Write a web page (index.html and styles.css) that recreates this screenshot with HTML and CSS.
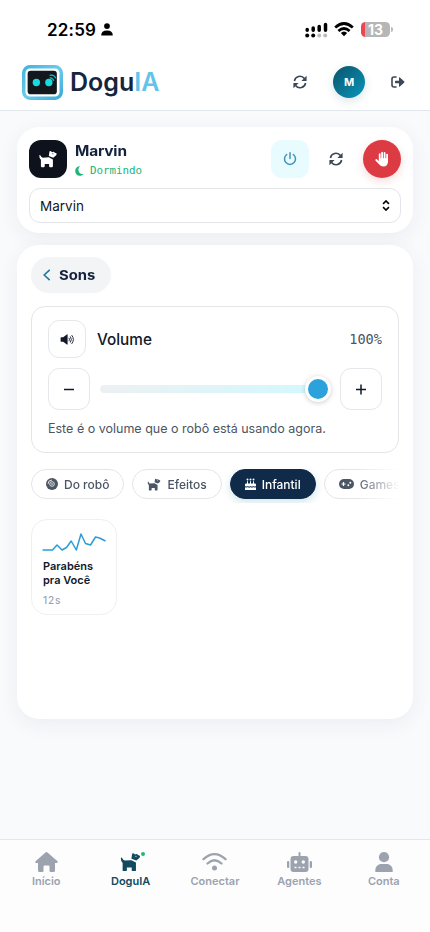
FILE: index.html
```html
<!DOCTYPE html>
<html lang="pt-BR">
<head>
<meta charset="utf-8">
<meta name="viewport" content="width=device-width, initial-scale=1">
<title>DoguIA</title>
<link rel="stylesheet" href="styles.css">
</head>
<body>
<svg class="defs" aria-hidden="true">
  <symbol id="dog" viewBox="0 0 70 66"><path fill-rule="evenodd" d="M3 20Q5 16 8 21Q10 27 16 28L38 27L53 35V60Q53 63 50 63H42Q39 63 39 60V51H23V60Q23 63 20 63H12Q9 63 9 60V36Q3 32 3 20ZM40 8Q41 2 46 5L50 8Q56 4 60 10L66 12Q68 17 64 20Q58 26 54 28L38 22ZM51 14a2 2 0 1 0 4 0a2 2 0 1 0-4 0Z"/></symbol>
  <symbol id="sync" viewBox="0 0 14 14"><path d="M1.400 6A5.600 5.600 0 0 1 11.400 3.600M12.600 8A5.600 5.600 0 0 1 2.600 10.400" fill="none" stroke="currentColor" stroke-width="1.600"/><path d="M13.600.8V6H8.400ZM.4 13.200V8H5.600Z"/></symbol>
  <symbol id="user" viewBox="0 0 18 20"><circle cx="9" cy="5.200" r="5.100"/><path d="M.3 20V18.400C.3 14.500 3 12 6.500 12H11.500C15 12 17.700 14.500 17.700 18.400V20Z"/></symbol>
</svg>

<header class="top">
  <div class="status">
    <span class="clock">22:59</span>
    <svg class="person" viewBox="0 0 12 13"><circle cx="6" cy="3.100" r="2.900"/><path d="M.2 12.600Q.2 7.500 6 7.500T11.800 12.600Z"/></svg>
    <svg class="signal" viewBox="0 0 23 16"><g stroke="#000" stroke-width="3.500" stroke-linecap="round"><path d="M2.200 7.500v.8M8.200 6v2.300M14.200 4.500v3.800M20.500 2.500v5.800"/></g><circle cx="2.200" cy="13.500" r="2"/><circle cx="8.200" cy="13.500" r="2"/><circle cx="14.200" cy="13.500" r="2" fill="#bbb"/><circle cx="20.200" cy="13.500" r="2" fill="#bbb"/></svg>
    <svg class="wifi" viewBox="0 0 20 15"><g fill="none" stroke="#000" stroke-width="2.700"><path d="M1.200 5.500Q10-2.500 18.800 5.500M4.400 9Q10 4 15.600 9"/></g><path d="M6.800 11Q10 8 13.200 11L10 14.300Z"/></svg>
    <span class="battery">13</span><i class="battery-tip"></i>
  </div>
  <div class="brandbar">
    <svg class="logo" viewBox="0 0 40 34"><defs><linearGradient id="lg" x2="1" y2="1"><stop stop-color="#43b4dc"/><stop offset=".5" stop-color="#6ccbed"/><stop offset="1" stop-color="#3caad8"/></linearGradient></defs><rect x="1.700" y="1.700" width="36.600" height="30.600" rx="6" fill="#fff" stroke="url(#lg)" stroke-width="3.400"/><rect x="5.500" y="5.500" width="28.500" height="23" rx="3" fill="#13181d"/><circle cx="14" cy="17" r="3.600" fill="#18dbe2"/><circle cx="26.200" cy="17" r="3.600" fill="#18dbe2"/><path d="M27 12.500Q30 12 31 15.500M27 10Q31.500 9 33 13" fill="none" stroke="#18bfc6" stroke-width="1.100"/></svg>
    <span class="brand">Dogu<b>IA</b></span>
    <button class="ghost sync-top"><svg><use href="#sync"/></svg></button>
    <span class="user">M</span>
    <button class="ghost exit"><svg viewBox="0 0 14 12"><path d="M5 1H3Q1 1 1 3V9Q1 11 3 11H5" fill="none" stroke="currentColor" stroke-width="1.600" stroke-linecap="round"/><path d="M4.700 4.700H8V1.600Q8.300 1 8.900 1.500L13.300 5.500Q13.700 6 13.300 6.500L8.900 10.500Q8.300 11 8 10.400V7.300H4.700Q4 7.300 4 6.600V5.400Q4 4.700 4.700 4.700Z"/></svg></button>
  </div>
</header>

<main>
  <section class="card robot">
    <div class="robot-row">
      <span class="avatar"><svg><use href="#dog"/></svg></span>
      <div class="who">
        <h1><span class="wide">Marvin</span></h1>
        <p><svg viewBox="0 0 9 10"><path d="M5.200.3C3.700 1.400 3.100 3 3.600 4.900C4.200 7.200 6.300 8.500 8.500 8C7.500 9.300 6.200 9.900 4.700 9.800C2 9.600.1 7.500.2 4.900C.3 2.200 2.500.1 5.200.3Z"/></svg>Dormindo</p>
      </div>
      <button class="square power"><svg viewBox="0 0 14 14"><path d="M7 .8V6.500M3.700 2.500A5.500 5.500 0 1 0 10.300 2.500" fill="none" stroke="currentColor" stroke-width="1.500" stroke-linecap="round"/></svg></button>
      <button class="square"><svg><use href="#sync"/></svg></button>
      <button class="square stop"><svg viewBox="0 0 16 16"><path d="M4.300 10V3.200a.9.9 0 0 1 1.800 0V7.200H6.700V1.700a.9.9 0 0 1 1.800 0V7.200H9.200V1.900a.9.9 0 0 1 1.800 0V7.200H11.700V3.600a.9.9 0 0 1 1.800 0V10.500C13.500 13.600 11.700 15.500 9 15.500C7 15.500 5.900 14.900 4.800 13.600L1.100 9.700C.4 8.800 1.500 7.600 2.400 8.300Z" transform="translate(.5)"/></svg></button>
    </div>
    <div class="select"><span>Marvin</span><svg viewBox="0 0 8 12"><path d="M.8 4.200 4 1 7.200 4.200M.8 7.800 4 11 7.200 7.800" fill="none" stroke="currentColor" stroke-width="1.700"/></svg></div>
  </section>

  <section class="card sounds">
    <button class="back"><svg viewBox="0 0 8 12"><path d="M6.700.8 1.200 6 6.700 11.200" fill="none" stroke="currentColor" stroke-width="1.600"/></svg><span class="wide">Sons</span></button>
    <div class="volume">
      <div class="vol-head">
        <span class="speaker"><svg viewBox="0 0 15 12"><path d="M0 4.100Q0 3.500.7 3.500H2.800L6.800.5Q7.600.1 7.600 1V11Q7.600 11.900 6.800 11.500L2.800 8.500H.7Q0 8.500 0 7.900Z"/><path d="M9 4.200Q10.300 6 9 7.800M10.500 2.700Q12.900 6 10.500 9.300M12 1.200Q15.800 6 12 10.800" fill="none" stroke="currentColor" stroke-width="1"/></svg></span>
        <h2>Volume</h2><span class="percent">100%</span>
      </div>
      <div class="slider-row">
        <button class="step"><svg viewBox="0 0 12 12"><path d="M1 6.500H11"/></svg></button>
        <div class="slider"><div class="track"></div><i class="thumb"></i></div>
        <button class="step"><svg viewBox="0 0 12 12"><path d="M1 6.500H11M6 1.500V11.500"/></svg></button>
      </div>
      <p>Este é o volume que o robô está usando agora.</p>
    </div>
    <div class="tabs">
      <span class="tab"><svg class="disc" viewBox="0 0 12 12"><circle cx="6" cy="6" r="6"/><g fill="none" stroke="#fff" stroke-width=".8"><circle cx="6" cy="6" r="2.300"/><path d="M2 6A4 4 0 0 1 6 2"/></g><circle cx="6" cy="6" r=".8" fill="#fff"/></svg>Do robô</span>
      <span class="tab"><svg class="pup"><use href="#dog"/></svg>Efeitos</span>
      <span class="tab active"><svg class="cake" viewBox="0 0 11 12"><path d="M2 3.300h1V6H2zM5 3.300h1V6H5zM8 3.300h1V6H8zM1 5.600h9q1 0 1 1V8Q9.600 9.200 8.200 8Q6.900 9.200 5.500 8Q4.200 9.200 2.800 8Q1.400 9.200 0 8V6.600q0-1 1-1ZM0 9.300Q1.400 10 2.800 9.100Q4.200 10.200 5.500 9.100Q6.900 10.200 8.200 9.100Q9.600 10 11 9.300V12H0Z"/><circle cx="2.500" cy="1.500" r="1"/><circle cx="5.500" cy="1.500" r="1"/><circle cx="8.500" cy="1.500" r="1"/></svg>Infantil</span>
      <span class="tab"><svg class="pad" viewBox="0 0 15 10"><rect width="15" height="10" rx="5"/><path d="M2.500 5H6.500M4.500 3V7" stroke="#fff" stroke-width="1.200"/><circle cx="9.300" cy="6.300" r="1" fill="#fff"/><circle cx="11.300" cy="3.700" r="1" fill="#fff"/></svg>Games</span>
    </div>
    <article class="sound">
      <svg viewBox="0 0 64 19"><path d="M.5 17H10.500L15 12 20 17 24.500 14.500 29.200 8 34.300 17 39 1 43.500 10.500 48.500 12 53.500 4 57.500 5 63.500 8" fill="none" stroke="#2b9dd4" stroke-width="1.500" stroke-linejoin="round"/></svg>
      <h3>Parabéns<br>pra Você</h3>
      <small>12s</small>
    </article>
  </section>
</main>

<nav>
  <a><svg class="i-home" viewBox="0 0 23 20"><path d="M10.500.5Q11.500-.3 12.500.5L22.500 9.300Q23.300 10.500 22 11H20V18.500Q20 20 18.500 20H15.500Q14.500 20 14.500 19V14.500Q14.500 13.500 13.500 13.500H9.500Q8.500 13.500 8.500 14.500V19Q8.500 20 7.500 20H4.500Q3 20 3 18.500V11H1Q-.3 10.500.5 9.300Z"/></svg>Início</a>
  <a class="on"><span class="dogwrap"><svg class="i-dog"><use href="#dog"/></svg><i></i></span>DoguIA</a>
  <a><svg class="i-wifi" viewBox="0 0 25 20"><path d="M1.500 7.200Q12.500-3 23.500 7.200M5.500 11.500Q12.500 5 19.500 11.500" fill="none" stroke="currentColor" stroke-width="2.300" stroke-linecap="round"/><circle cx="12.500" cy="16" r="2.500"/></svg>Conectar</a>
  <a><svg class="i-bot" viewBox="0 0 25 20"><path fill-rule="evenodd" d="M11.500 1a1 1 0 0 1 2 0V4H18.500Q21.500 4 21.500 7V17Q21.500 20 18.500 20H6.500Q3.500 20 3.500 17V7Q3.500 4 6.500 4H11.500ZM7 10a1.700 1.700 0 1 0 3.400 0a1.700 1.700 0 1 0-3.400 0M14.600 10a1.700 1.700 0 1 0 3.400 0a1.700 1.700 0 1 0-3.400 0M7.500 14.800V16.300H9.500V14.800ZM11.500 14.800V16.300H13.500V14.800ZM15.500 14.800V16.300H17.500V14.800Z"/><rect y="9" width="2.300" height="7" rx="1.100"/><rect x="22.700" y="9" width="2.300" height="7" rx="1.100"/></svg>Agentes</a>
  <a><svg class="i-user"><use href="#user"/></svg>Conta</a>
</nav>
</body>
</html>
```
FILE: styles.css
```css
* { box-sizing: border-box; }
body { margin: 0; height: 932px; display: flex; flex-direction: column; overflow: hidden; background: #f9fafc; font-family: Inter, sans-serif; color: #111827; }
svg { display: block; fill: currentColor; flex: none; }
button { padding: 0; border: 0; background: none; font: inherit; color: inherit; display: flex; align-items: center; justify-content: center; flex: none; }
h1, h2, h3, p { margin: 0; }
.defs { position: absolute; width: 0; height: 0; }
.wide { display: inline-block; transform: scaleX(1.1); transform-origin: left center; }

.top { height: 111px; flex: none; background: #fff; border-bottom: 1px solid #e2e7ed; }
.status { height: 58px; display: flex; align-items: center; padding: 1px 37px 0 47px; color: #000; }
.clock { font-size: 17px; font-weight: 600; width: 50px; letter-spacing: .2px; }
.person { width: 12px; height: 13px; margin-left: 4px; }
.signal { width: 23px; height: 16px; margin-left: auto; margin-right: 6px; }
.wifi { width: 20px; height: 15px; margin-right: 7px; }
.battery { width: 29px; height: 15px; border-radius: 4.500px; background: linear-gradient(90deg, #ef4550 4px, #b6b6b6 4px); color: #fff; font-size: 14px; font-weight: 700; line-height: 15px; text-align: center; }
.battery-tip { width: 2px; height: 5px; margin-left: 1px; border-radius: 0 2px 2px 0; background: #bbb; }
.brandbar { height: 48px; display: flex; align-items: center; padding: 0 16px 0 22px; }
.logo { width: 41px; height: 35px; }
.brand { margin-left: 7px; font-size: 25px; font-weight: 600; letter-spacing: 0; color: #14263f; line-height: 34px; }
.brand b { font-weight: 600; color: #62c4e8; }
.ghost { width: 32px; height: 32px; color: #3c4856; }
.sync-top { margin-left: auto; margin-right: 17px; }
.sync-top svg { width: 14px; height: 14px; }
.user { width: 32px; height: 32px; margin-right: 17px; border-radius: 50%; display: grid; place-items: center; background: linear-gradient(135deg, #0b5468, #0896bd); color: #fff; font-size: 11px; font-weight: 700; box-shadow: 0 3px 10px #0c4a5e26; }
.exit svg { width: 14px; height: 12px; }

main { flex: 1; padding: 16px 17px 0; }
.card { background: #fff; border-radius: 22px; box-shadow: 0 5px 20px #1b345510; }
.robot { height: 106px; padding: 13px 12px 12px; margin-bottom: 12px; }
.robot-row { display: flex; height: 38px; gap: 8px; }
.avatar { width: 38px; height: 38px; border-radius: 12px; background: #0d121d; color: #fff; display: grid; place-items: center; }
.avatar svg { width: 20px; height: 18px; }
.who { flex: 1; }
.who h1 { font-size: 14px; line-height: 20px; font-weight: 700; color: #14213b; padding-top: 1px; letter-spacing: -.15px; }
.who p { display: flex; align-items: center; gap: 6px; font: 10.800px/20px "DejaVu Sans Mono", monospace; color: #20b67b; }
.who p svg { width: 9px; height: 10px; }
.square { width: 38px; height: 38px; border-radius: 11px; color: #3c4856; }
.square svg { width: 14px; height: 14px; }
.power { background: #e8fcff; color: #4194b8; }
.stop { border-radius: 50%; background: #dc3b43; color: #fff; box-shadow: 0 3px 9px #dc3b4333; }
.stop svg { width: 16px; height: 16px; }
.select { height: 35px; margin-top: 10px; border: 1px solid #e3e5e9; border-radius: 11px; padding: 0 10px; display: flex; align-items: center; justify-content: space-between; font-size: 13.500px; }
.select svg { width: 8px; height: 11px; color: #000; }

.sounds { height: 474px; padding: 12px 14px; }
.back { width: 80px; height: 36px; border-radius: 18px; background: #f3f4f6; gap: 8px; justify-content: flex-start; padding-left: 12px; font-size: 13.500px; font-weight: 700; color: #14213b; }
.back svg { width: 8px; height: 12px; color: #23799a; }
.volume { margin-top: 13px; height: 147px; border: 1px solid #e3e5e9; border-radius: 14px; padding: 13px 16px; }
.vol-head { display: flex; align-items: center; height: 38px; }
.speaker, .step { border: 1px solid #e5e7eb; border-radius: 11px; display: flex; align-items: center; justify-content: center; }
.speaker { width: 38px; height: 38px; }
.speaker svg { width: 15px; height: 11px; }
.vol-head h2 { margin-left: 11px; font-size: 15.300px; font-weight: 550; }
.percent { margin-left: auto; font: 13.600px "DejaVu Sans Mono", monospace; color: #4b5563; }
.slider-row { display: flex; align-items: center; gap: 10px; margin-top: 10px; height: 42px; }
.step { width: 42px; height: 42px; }
.step svg { width: 12px; height: 12px; stroke: #111827; stroke-width: 1.500; }
.slider { position: relative; flex: 1; }
.track { height: 8px; border-radius: 4px; background: linear-gradient(90deg, #edf0f2, #d0f9ff); }
.thumb { position: absolute; right: -1px; top: -9px; width: 26px; height: 26px; border-radius: 50%; border: 3px solid #fff; background: #2ca2dc; box-shadow: 0 1px 5px #0003; }
.volume p { margin-top: 9px; font-size: 12.500px; line-height: 20px; color: #4b5563; }
.tabs { display: flex; gap: 8px; margin-top: 16px; height: 34px; overflow: hidden; -webkit-mask-image: linear-gradient(90deg, #000 88%, transparent); mask-image: linear-gradient(90deg, #000 88%, transparent); }
.tab { flex: none; height: 30px; display: flex; align-items: center; gap: 6px; padding: 0 14px; border: 1px solid #e2e4e8; border-radius: 15px; font-size: 12px; font-weight: 500; color: #4b5563; white-space: nowrap; }
.active { background: #102a49; border-color: #102a49; color: #fff; box-shadow: 0 3px 8px #167a9833; }
.disc { width: 12px; height: 12px; }
.pup { width: 14px; height: 13px; }
.cake { width: 11px; height: 12px; }
.pad { width: 15px; height: 10px; }
.sound { width: 86px; height: 96px; margin-top: 16px; padding: 12px 11px; border: 1px solid #eef0f3; border-radius: 16px; }
.sound svg { width: 64px; height: 19px; margin-top: 1px; margin-left: -1px; }
.sound h3 { margin-top: 7px; font-size: 11px; line-height: 14px; font-weight: 600; }
.sound small { display: block; margin-top: 7px; font-size: 10px; line-height: 13px; font-weight: 500; letter-spacing: .8px; color: #9ca3af; }

nav { flex: none; height: 93px; display: grid; grid-template-columns: repeat(5, 1fr); padding: 12px 4px 0; background: #fdfdfe; border-top: 1px solid #e0e7ef; }
nav a { display: flex; flex-direction: column; align-items: center; font-size: 11px; line-height: 14px; font-weight: 600; color: #9ca3af; gap: 2px; }
nav .on { color: #114a5e; }
nav svg { height: 20px; }
.i-home { width: 23px; }
.i-wifi, .i-bot { width: 25px; }
.i-user { width: 18px; }
.dogwrap { position: relative; }
.i-dog { width: 23px; }
.dogwrap i { position: absolute; right: -3px; top: 0; width: 4px; height: 4px; border-radius: 50%; background: #20b67b; }
```
